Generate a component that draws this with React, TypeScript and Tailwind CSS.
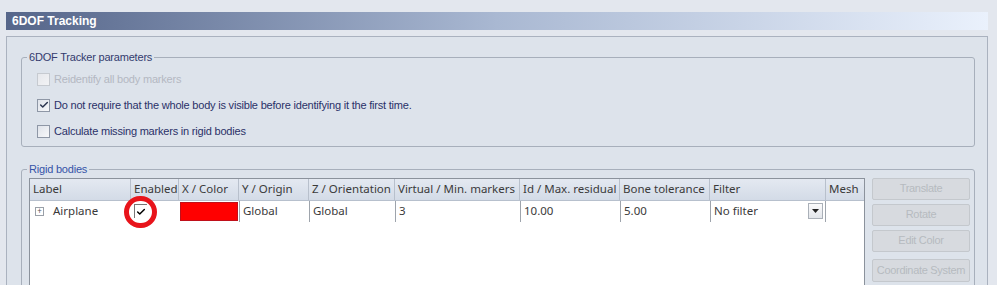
import { Check } from "lucide-react";

const COLUMNS = [
  { label: "Label", w: 101 },
  { label: "Enabled", w: 48 },
  { label: "X / Color", w: 60 },
  { label: "Y / Origin", w: 70 },
  { label: "Z / Orientation", w: 86 },
  { label: "Virtual / Min. markers", w: 125 },
  { label: "Id / Max. residual", w: 100 },
  { label: "Bone tolerance", w: 90 },
  { label: "Filter", w: 116 },
  { label: "Mesh", w: 39 },
];

const BUTTONS = [
  { label: "Translate", h: "h-[22px]", mt: "" },
  { label: "Rotate", h: "h-[22px]", mt: "mt-[4px]" },
  { label: "Edit Color", h: "h-[22px]", mt: "mt-[4px]" },
  { label: "Coordinate System", h: "h-[23px]", mt: "mt-[7px]" },
];

function Box({ checked, disabled }: { checked?: boolean; disabled?: boolean }) {
  return (
    <span
      className={`flex h-[13px] w-[13px] shrink-0 items-center justify-center border bg-gradient-to-br ${
        disabled ? "border-[#c6cad0] from-[#e6e8ec] to-[#f2f3f5]" : "border-[#8e97a6] from-[#dfe3ea] to-[#f7f8fa]"
      }`}
    >
      {checked && <Check size={10} strokeWidth={3.5} className="text-[#2b3550]" />}
    </span>
  );
}

function Option({ text, checked, disabled }: { text: string; checked?: boolean; disabled?: boolean }) {
  return (
    <label className="flex h-[13px] items-center gap-[4px]">
      <Box checked={checked} disabled={disabled} />
      <span className={disabled ? "text-[#b4b8c2]" : "text-[#2a3168]"}>{text}</span>
    </label>
  );
}

export default function App() {
  return (
    <div className="h-[285px] w-[997px] overflow-hidden bg-[#e3e7ee] pt-[12px] font-['Liberation_Sans',Arial,sans-serif]">
      <div className="ml-[6px] mr-[9px] flex h-[18px] items-center bg-gradient-to-r from-[#56668a] via-[#a9b8d2] to-[#eaf1fc] pl-[6px] text-[12px] font-bold text-white">
        6DOF Tracking
      </div>

      <div className="ml-[6px] mr-[9px] mt-[6px] h-[300px] border-l border-r border-t border-[#aab2bf] bg-[#dde3eb] pl-[14px] pr-[12px] pt-[12px]">
        <fieldset className="h-[98px] rounded-[3px] border border-[#a7afbb]">
          <legend className="ml-[5px] px-[2px] text-[11px] tracking-[-0.2px] text-[#333b6e]">
            6DOF Tracker parameters
          </legend>
          <div className="mt-[7px] flex flex-col gap-[13px] pl-[15px] text-[11px] tracking-[-0.2px]">
            <Option text="Reidentify all body markers" disabled />
            <Option text="Do not require that the whole body is visible before identifying it the first time." checked />
            <Option text="Calculate missing markers in rigid bodies" />
          </div>
        </fieldset>

        <fieldset className="mt-[14px] h-[140px] rounded-[3px] border border-[#a7afbb]">
          <legend className="ml-[5px] px-[2px] text-[11px] tracking-[-0.2px] text-[#3553a8]">Rigid bodies</legend>
          <div className="ml-[7px] flex gap-[7px] font-['Noto_Sans',sans-serif] text-[11.5px] text-[#3a3a3a]">
            <div className="h-[120px] w-[836px] border border-[#8b929c] bg-white">
              <div className="flex h-[22px] border-b border-[#b7c0cd] bg-gradient-to-b from-[#e4e9f1] to-[#d3dbe7]">
                {COLUMNS.map((c, i) => (
                  <div
                    key={c.label}
                    style={{ width: c.w }}
                    className={`flex shrink-0 items-center pl-[3px] ${
                      i === COLUMNS.length - 1 ? "" : "border-r border-[#b8c0cc]"
                    }`}
                  >
                    {c.label}
                  </div>
                ))}
              </div>
              <div className="flex h-[21px] items-stretch">
                <div style={{ width: 101 }} className="flex shrink-0 items-center pl-[5px]">
                  <span className="flex h-[9px] w-[9px] items-center justify-center border border-[#9aa0a8] text-[8px] leading-none text-[#555]">
                    +
                  </span>
                  <span className="ml-[9px]">Airplane</span>
                </div>
                <div style={{ width: 48 }} className="relative flex shrink-0 items-center pl-[3px]">
                  <span className="flex h-[14px] w-[13px] items-center justify-center border-l border-t border-[#777]">
                    <Check size={10} strokeWidth={3.5} className="text-black" />
                  </span>
                  <span className="absolute left-[-7px] top-[-5px] h-[32px] w-[33px] rounded-full border-[5px] border-[#e8141b]" />
                </div>
                <div style={{ width: 60 }} className="flex shrink-0 py-[1px] pl-[1px]">
                  <div className="h-[19px] w-[58px] border border-[#c0101a] bg-[#ff0000]" />
                </div>
                <div style={{ width: 70 }} className="flex shrink-0 items-center border-l border-[#9ea4ac] pl-[3px]">
                  Global
                </div>
                <div style={{ width: 86 }} className="flex shrink-0 items-center border-l border-[#9ea4ac] pl-[3px]">
                  Global
                </div>
                <div style={{ width: 125 }} className="flex shrink-0 items-center border-l border-[#9ea4ac] pl-[3px]">
                  3
                </div>
                <div style={{ width: 100 }} className="flex shrink-0 items-center border-l border-[#9ea4ac] pl-[3px]">
                  10.00
                </div>
                <div style={{ width: 90 }} className="flex shrink-0 items-center border-l border-[#9ea4ac] pl-[3px]">
                  5.00
                </div>
                <div
                  style={{ width: 116 }}
                  className="flex shrink-0 items-center justify-between border-l border-r border-[#9ea4ac] pl-[3px] pr-[2px]"
                >
                  No filter
                  <span className="flex h-[16px] w-[15px] items-center justify-center border border-[#aab0b8] bg-gradient-to-b from-[#fbfbfc] to-[#e2e5ea]">
                    <svg width="7" height="4" viewBox="0 0 7 4">
                      <path d="M0 0h7L3.5 4z" fill="#222" />
                    </svg>
                  </span>
                </div>
              </div>
            </div>

            <div className="flex w-[98px] flex-col font-['Liberation_Sans',Arial,sans-serif] text-[11px] tracking-[-0.3px] text-[#b6bac0]">
              {BUTTONS.map((b) => (
                <div
                  key={b.label}
                  className={`${b.h} ${b.mt} flex items-center justify-center rounded-[2px] border border-[#c4c8cd] bg-[#d7dadf]`}
                >
                  {b.label}
                </div>
              ))}
            </div>
          </div>
        </fieldset>
      </div>
    </div>
  );
}
